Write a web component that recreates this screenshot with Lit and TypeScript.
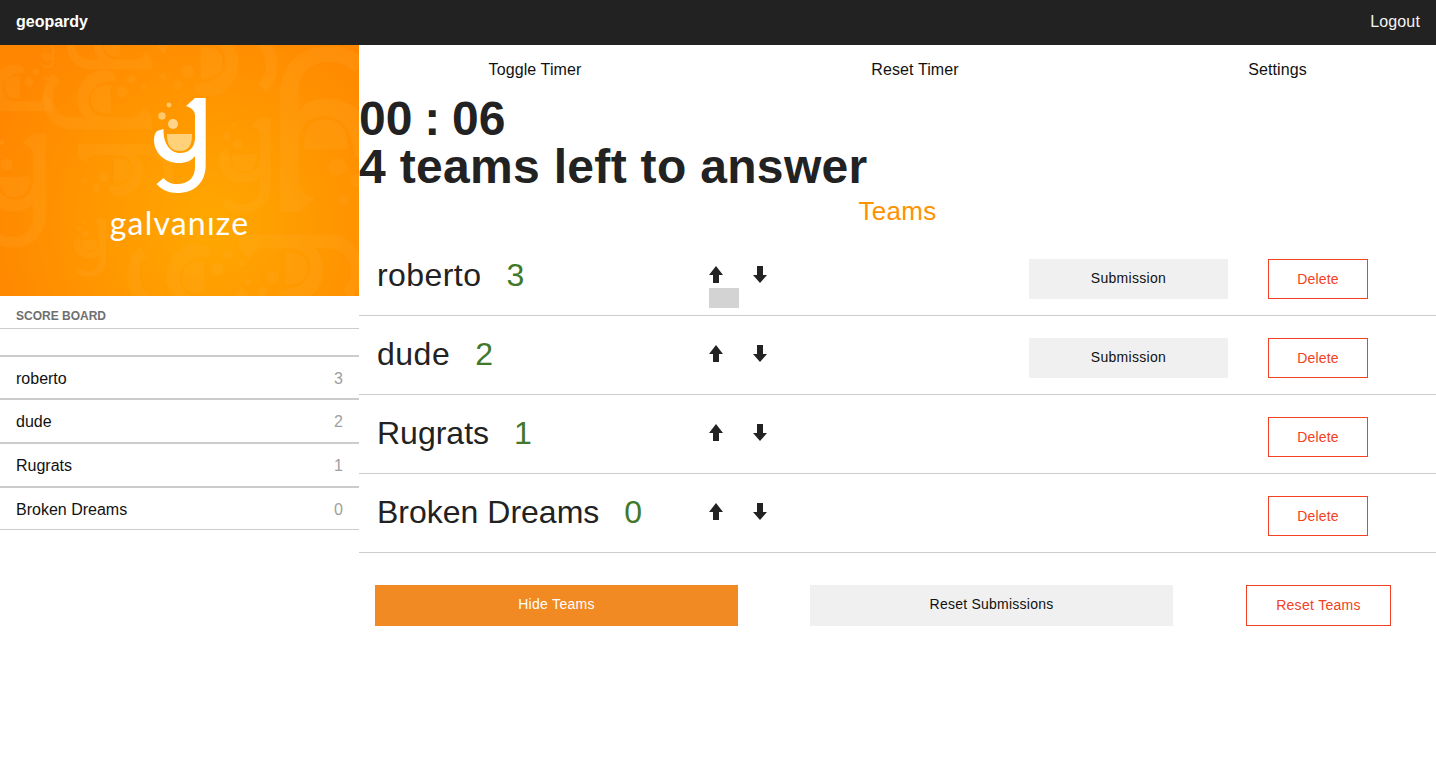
import { LitElement, html, css, svg } from 'lit';
import { customElement } from 'lit/decorators.js';

// spacing: small per-name correction, the reference font runs a bit wider on these
const TEAMS = [
  { name: 'roberto', score: 3, submitted: true, spacing: 0.43 },
  { name: 'dude', score: 2, submitted: true, spacing: 0.5 },
  { name: 'Rugrats', score: 1, submitted: false, spacing: 0 },
  { name: 'Broken Dreams', score: 0, submitted: false, spacing: 0 },
];

// the big "g" mark, also used faintly for the banner pattern
const G_PATH =
  'M205.7 98V165C205.7 183 194 193 177 193C169 193 162 190 156.5 184L163.5 178C167 182 171 184 177 184C188 184 195 178 195 167V156C191 161 186 163 179 163C165 163 154 153 154 140C154 136 155 133 157 131L163.5 129C163 143 170 153 180 153C189 153 195 147 195 138V116C195 111 192 108 186 106L195 98Z';
const CUP_PATH = 'M167 134H192C192 146 188 151 180 151C171 151 167 146 167 134Z';

// x, y, scale, rotation of the faint letters behind the logo
const GHOSTS = [
  [98, 100, 1.15, 90],
  [215, 62, 1.3, -90],
  [125, 170, 1.0, -90],
  [245, 165, 1.0, 0],
  [325, 130, 1.75, 180],
  [15, 190, 1.2, 0],
  [300, 268, 1.3, -90],
  [190, 278, 1.3, 90],
  [90, 247, 0.62, 0],
  [48, 56, 0.25, 0],
  [10, 88, 0.9, 90],
  [110, 46, 0.9, 90],
];

const ghost = ([x, y, s, r]: number[]) => svg`
  <g transform="translate(${x} ${y}) rotate(${r}) scale(${s}) translate(-180 -145)" fill="#ffb84a" opacity="0.13">
    <path d=${G_PATH}></path>
    <path d=${CUP_PATH}></path>
    <circle cx="173" cy="124" r="5"></circle>
    <circle cx="162" cy="116" r="3.7"></circle>
    <circle cx="169" cy="105" r="2.4"></circle>
  </g>`;

@customElement('app-root')
export class AppRoot extends LitElement {
  static styles = css`
    :host {
      display: block;
      min-height: 777px;
      background: #fff;
      color: #222;
      font-family: 'Liberation Sans', Arial, sans-serif;
    }
    .topbar {
      height: 45px;
      box-sizing: border-box;
      background: #222;
      color: #fff;
      display: flex;
      align-items: center;
      justify-content: space-between;
      padding: 0 16px 2px;
    }
    .brand { font-size: 16px; font-weight: bold; }
    .logout { font-size: 16px; color: #f4f4f4; letter-spacing: 0.15px; }
    .layout { display: grid; grid-template-columns: 359px 1fr; }
    .banner { display: block; width: 359px; height: 251px; }
    .board-title {
      height: 33px;
      box-sizing: border-box;
      padding: 13px 16px 0;
      font-size: 12px;
      font-weight: bold;
      color: #6f6f6f;
      border-bottom: 1px solid #ccc;
    }
    .board-gap { height: 26px; border-bottom: 2px solid #ccc; }
    .board-row {
      height: 44px;
      box-sizing: border-box;
      display: flex;
      align-items: center;
      justify-content: space-between;
      padding: 2px 16px 0;
      font-size: 16px;
      color: #111;
      border-bottom: 2px solid #ccc;
    }
    .board-gap + .board-row { height: 43px; }
    .board-row:last-child { height: 42px; border-bottom-width: 1px; }
    .board-row span:last-child { color: #a0a0a0; }
    .controls {
      height: 50px;
      display: grid;
      grid-template-columns: 352px 408px 317px;
      align-items: center;
      text-align: center;
      font-size: 16px;
      letter-spacing: 0.1px;
      color: #111;
    }
    .big { margin: 0; font-size: 48px; line-height: 48px; font-weight: bold; color: #222; }
    .clock { word-spacing: -1.5px; }
    .left-count { letter-spacing: 0.32px; }
    .section-title {
      margin: 0;
      height: 46px;
      line-height: 40px;
      text-align: center;
      font-size: 26px;
      font-weight: normal;
      letter-spacing: 0.3px;
      color: #ff9200;
    }
    .team {
      height: 78px;
      display: flex;
      align-items: flex-start;
      border-bottom: 1px solid #ccc;
      position: relative;
    }
    .who {
      width: 349px;
      padding: 18px 0 0 18px;
      box-sizing: border-box;
      font-size: 32px;
      line-height: 40px;
      color: #222;
      white-space: nowrap;
    }
    .who b { font-weight: normal; color: #41782a; margin-left: 25px; letter-spacing: 0; }
    .arrows { width: 321px; display: flex; gap: 28px; padding-top: 28px; }
    .arrows svg { display: block; width: 16px; height: 19px; }
    .slot { width: 199px; margin-right: 40px; padding-top: 22px; }
    .grey-btn {
      box-sizing: border-box;
      background: #f0f0f0;
      color: #111;
      height: 40px;
      padding-bottom: 2px;
      display: flex;
      align-items: center;
      justify-content: center;
      font-size: 14px;
      letter-spacing: 0.3px;
    }
    .danger {
      box-sizing: border-box;
      border: 1px solid #f24123;
      color: #f24123;
      height: 40px;
      display: flex;
      align-items: center;
      justify-content: center;
      font-size: 14px;
      letter-spacing: 0.15px;
    }
    .del { width: 100px; margin-top: 22px; }
    .grab {
      position: absolute;
      left: 350px;
      top: 51px;
      width: 30px;
      height: 20px;
      background: #d3d3d3;
    }
    .actions {
      display: grid;
      grid-template-columns: 363px 363px 146px;
      column-gap: 72px;
      padding: 32px 0 0 16px;
    }
    .actions .grey-btn { height: 41px; padding-bottom: 3px; letter-spacing: 0.24px; }
    .actions .danger { height: 41px; margin-left: 1px; padding-bottom: 1px; letter-spacing: 0.3px; }
    .orange {
      box-sizing: border-box;
      background: #f28a24;
      color: #fff;
      height: 41px;
      padding-bottom: 3px;
      display: flex;
      align-items: center;
      justify-content: center;
      font-size: 14px;
      letter-spacing: 0.3px;
    }
  `;

  private renderBanner() {
    return html`
      <svg class="banner" viewBox="0 45 359 251" role="img" aria-label="galvanize">
        <defs>
          <radialGradient id="sun" gradientUnits="userSpaceOnUse" cx="210" cy="225" r="240">
            <stop offset="0" stop-color="#ffa800"></stop>
            <stop offset="0.55" stop-color="#ff9500"></stop>
            <stop offset="1" stop-color="#ff8600"></stop>
          </radialGradient>
        </defs>
        <rect x="0" y="45" width="359" height="251" fill="url(#sun)"></rect>
        ${GHOSTS.map(ghost)}
        <path d=${G_PATH} fill="#fff"></path>
        <path d=${CUP_PATH} fill="#ffd27a"></path>
        <circle cx="173" cy="124" r="5" fill="#ffd58a"></circle>
        <circle cx="162" cy="116" r="3.7" fill="#ffc868"></circle>
        <circle cx="169" cy="105" r="2.4" fill="#ffc868"></circle>
        <text x="179.5" y="235" text-anchor="middle" fill="#fff" font-family="Lato, sans-serif"
          font-size="32" letter-spacing="1.2">galvanıze</text>
      </svg>
    `;
  }

  private renderTeam(team: (typeof TEAMS)[number], index: number) {
    return html`
      <div class="team">
        <div class="who" style="letter-spacing:${team.spacing}px">${team.name}<b>${team.score}</b></div>
        <div class="arrows">
          <svg viewBox="0 0 16 19"><path d="M8 1L15 10H11V18H5V10H1Z" fill="#222"></path></svg>
          <svg viewBox="0 0 16 19"><path d="M5 1H11V10H15L8 18L1 10H5Z" fill="#222"></path></svg>
        </div>
        <div class="slot">
          ${team.submitted ? html`<div class="grey-btn">Submission</div>` : ''}
        </div>
        <div class="danger del">Delete</div>
        ${index === 0 ? html`<div class="grab"></div>` : ''}
      </div>
    `;
  }

  render() {
    return html`
      <div class="topbar">
        <span class="brand">geopardy</span>
        <span class="logout">Logout</span>
      </div>
      <div class="layout">
        <aside>
          ${this.renderBanner()}
          <div class="board-title">SCORE BOARD</div>
          <div class="board-gap"></div>
          ${TEAMS.map(
            (t) => html`<div class="board-row"><span>${t.name}</span><span>${t.score}</span></div>`
          )}
        </aside>
        <main>
          <div class="controls">
            <span>Toggle Timer</span>
            <span>Reset Timer</span>
            <span>Settings</span>
          </div>
          <h1 class="big clock">00 : 06</h1>
          <h1 class="big left-count">4 teams left to answer</h1>
          <h2 class="section-title">Teams</h2>
          ${TEAMS.map((t, i) => this.renderTeam(t, i))}
          <div class="actions">
            <div class="orange">Hide Teams</div>
            <div class="grey-btn">Reset Submissions</div>
            <div class="danger">Reset Teams</div>
          </div>
        </main>
      </div>
    `;
  }
}
